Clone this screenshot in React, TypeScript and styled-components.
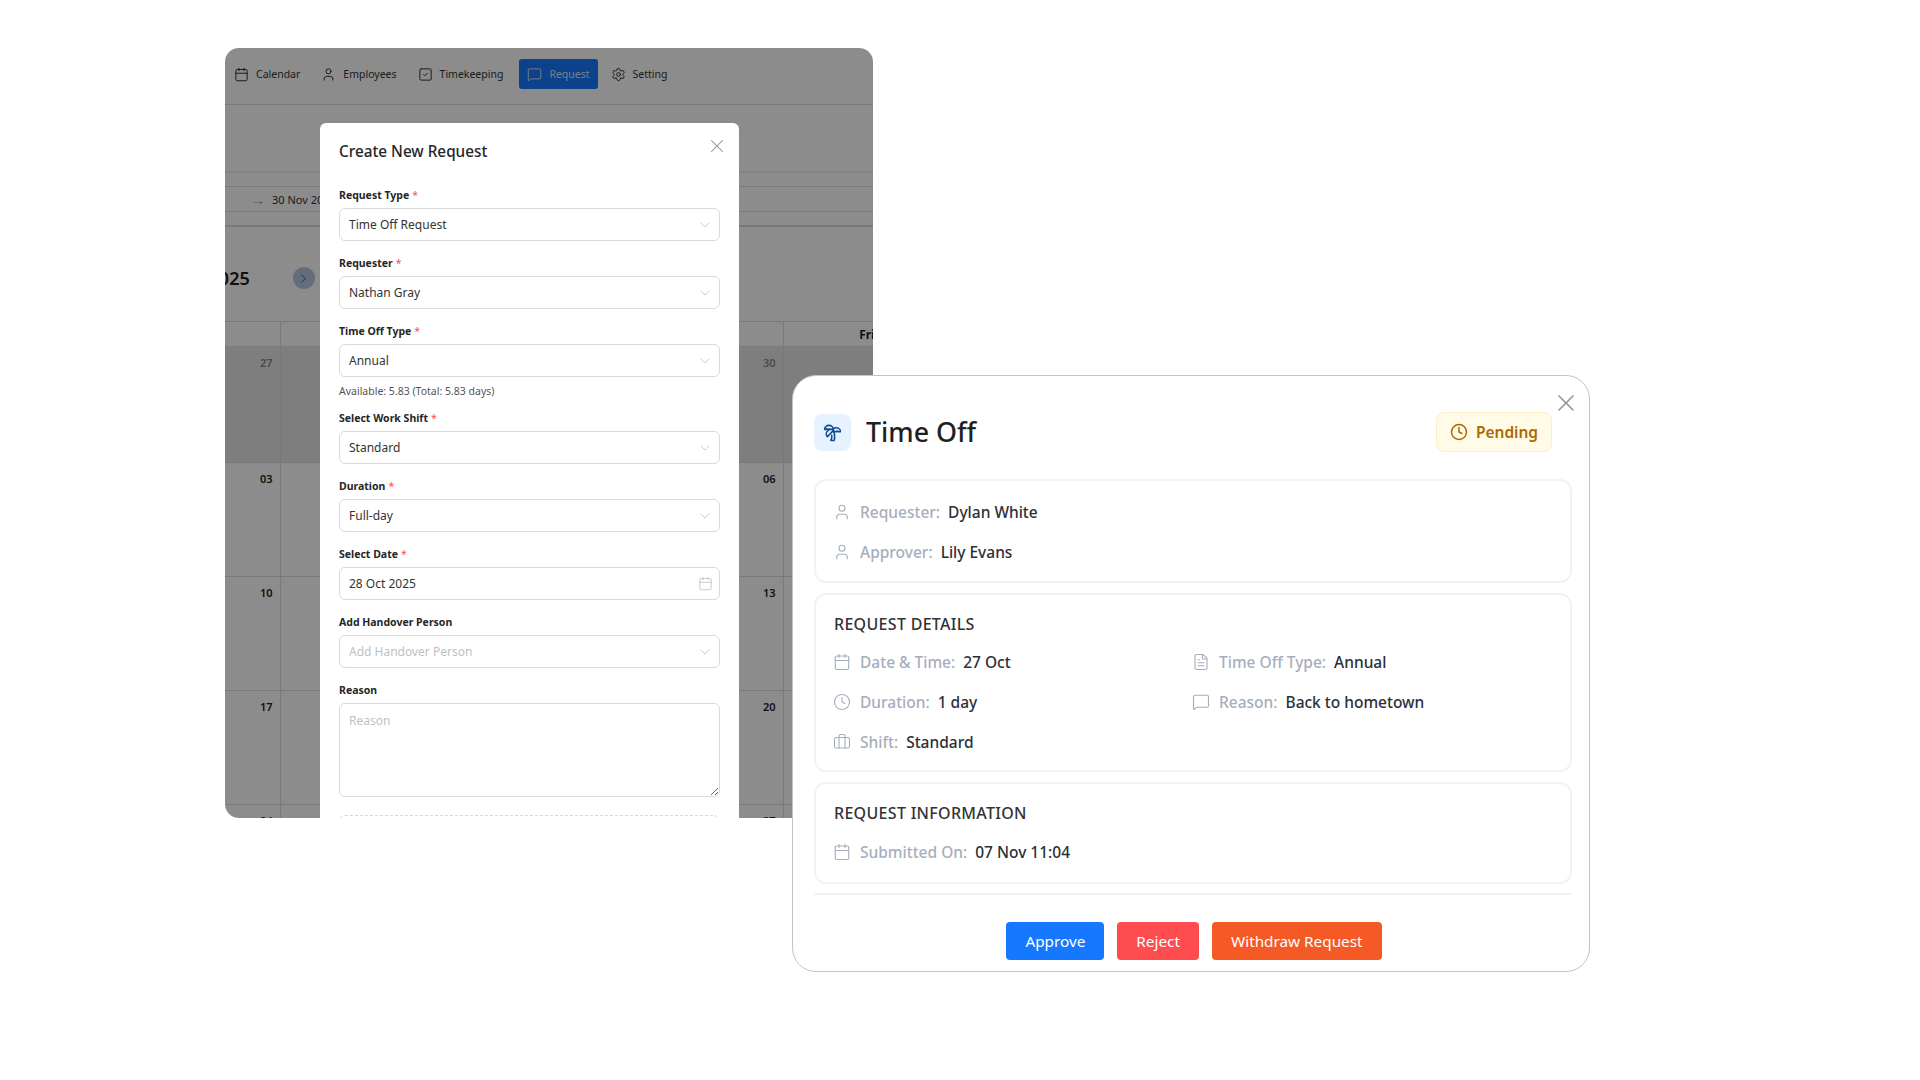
import React from 'react';
import styled, { createGlobalStyle } from 'styled-components';
import {
  Briefcase,
  Calendar,
  ChevronDown,
  ChevronRight,
  Clock,
  FileText,
  MessageSquare,
  Settings,
  SquareCheck,
  TreePalm,
  User,
  X,
} from 'lucide-react';

const GlobalStyle = createGlobalStyle`
  html, body {
    margin: 0;
    padding: 0;
    background: #fff;
  }
  * {
    box-sizing: border-box;
  }
`;

const FONT = `"Noto Sans", "Open Sans", "Liberation Sans", sans-serif`;

const Canvas = styled.div`
  position: relative;
  width: 1920px;
  height: 1080px;
  overflow: hidden;
  background: #fff;
  font-family: ${FONT};
`;

// back window
const BackWindow = styled.div`
  position: absolute;
  left: 225px;
  top: 48px;
  width: 648px;
  height: 770px;
  border-radius: 14px;
  overflow: hidden;
  background: #fff;
`;

const Mask = styled.div`
  position: absolute;
  inset: 0;
  background: rgba(0, 0, 0, 0.45);
`;

const Nav = styled.nav`
  height: 57px;
  display: flex;
  align-items: center;
  gap: 5px;
  padding: 0 0 4px 1px;
  border-bottom: 1px solid #ddd;
`;

const NavItem = styled.div<{ $active?: boolean }>`
  height: 30px;
  display: flex;
  align-items: center;
  gap: 7px;
  margin-left: ${(p) => (p.$active ? '3px' : '0')};
  padding: 0 8px;
  border-radius: 3px;
  font-size: 10.5px;
  color: ${(p) => (p.$active ? '#d8e6fb' : '#333')};
  background: ${(p) => (p.$active ? '#1677ff' : 'transparent')};
`;

const Hero = styled.div`
  height: 68px;
  border-bottom: 2px solid #eee;
`;

const FilterBar = styled.div`
  height: 54px;
  padding-top: 13px;
  border-bottom: 2px solid #ddd;
`;

const RangeBox = styled.div`
  height: 26px;
  display: flex;
  align-items: center;
  gap: 7px;
  padding-left: 26px;
  border-top: 1px solid #ddd;
  border-bottom: 1px solid #ddd;
  font-size: 11px;
  color: #333;
`;

const Arrow = styled.span`
  font-size: 14px;
  color: #999;
`;

const MonthBar = styled.div`
  height: 95px;
  display: flex;
  align-items: center;
  gap: 43px;
  margin-left: -56px;
  padding-top: 8px;
  border-bottom: 1px solid #ddd;
`;

const MonthTitle = styled.div`
  font-size: 18px;
  font-weight: 600;
  color: #222;
  white-space: nowrap;
`;

const RoundButton = styled.div`
  width: 22px;
  height: 22px;
  border-radius: 50%;
  display: flex;
  align-items: center;
  justify-content: center;
  background: #b4c8e0;
  color: #1f5fa8;
`;

const CalendarGrid = styled.div`
  display: grid;
  grid-template-columns: repeat(5, 167.67px);
  grid-template-rows: 25px 116px;
  grid-auto-rows: 114px;
  margin-left: -112px;
  width: 838px;
`;

const HeadCell = styled.div`
  height: 25px;
  display: flex;
  align-items: center;
  justify-content: center;
  font-size: 12px;
  font-weight: 700;
  color: #222;
  border-right: 1px solid #ddd;
  border-bottom: 1px solid #ddd;
`;

const DayCell = styled.div<{ $muted?: boolean }>`
  padding: 8px 7px;
  text-align: right;
  font-size: 11px;
  font-weight: 600;
  color: ${(p) => (p.$muted ? '#888' : '#222')};
  background: ${(p) => (p.$muted ? '#e6e6e6' : 'transparent')};
  border-right: 1px solid #ddd;
  border-bottom: 1px solid #ddd;
`;

// create request modal
const Modal = styled.div`
  position: absolute;
  left: 95px;
  top: 75px;
  width: 419px;
  min-height: 760px;
  padding: 16px 19px;
  background: #fff;
  border-radius: 6px;
`;

const ModalClose = styled.div`
  position: absolute;
  top: 12px;
  right: 11px;
  color: #8c8c8c;
  display: flex;
`;

const ModalTitle = styled.h2`
  margin: 0 0 24px;
  font-size: 15.3px;
  line-height: 24px;
  font-weight: 500;
  color: #262626;
`;

const Field = styled.div`
  margin-bottom: 14px;
`;

const Label = styled.div`
  height: 16px;
  margin-bottom: 5px;
  font-size: 10.5px;
  line-height: 16px;
  font-weight: 700;
  color: #262626;
`;

const Star = styled.span`
  margin-left: 3px;
  color: #ff4d4f;
  font-weight: 400;
`;

const SelectBox = styled.div<{ $placeholder?: boolean }>`
  height: 33px;
  display: flex;
  align-items: center;
  justify-content: space-between;
  padding: 0 6px 0 9px;
  border: 1px solid #d9d9d9;
  border-radius: 6px;
  font-size: 12px;
  color: ${(p) => (p.$placeholder ? '#bfbfbf' : '#333')};
  svg {
    color: #bfbfbf;
  }
`;

const Help = styled.div`
  margin: 6px 0 -3px;
  height: 16px;
  font-size: 10.5px;
  line-height: 16px;
  color: #555;
`;

const Reason = styled.textarea`
  display: block;
  width: 100%;
  height: 94px;
  padding: 8px 9px;
  border: 1px solid #d9d9d9;
  border-radius: 6px;
  outline: none;
  font-family: ${FONT};
  font-size: 12px;
  &::placeholder {
    color: #bfbfbf;
  }
`;

const Dropzone = styled.div`
  height: 40px;
  margin-top: 18px;
  border: 1px dashed #d9d9d9;
  border-radius: 6px;
`;

// time off detail window
const DetailWindow = styled.div`
  position: absolute;
  left: 792px;
  top: 375px;
  width: 798px;
  height: 597px;
  padding: 36px 17px 0 21px;
  background: #fff;
  border: 1px solid #c4c4c4;
  border-radius: 24px;
`;

const DetailClose = styled.div`
  position: absolute;
  top: 13px;
  right: 9px;
  display: flex;
  color: #999;
`;

const DetailHeader = styled.div`
  height: 40px;
  display: flex;
  align-items: center;
  margin-bottom: 27px;
  padding-right: 20px;
`;

const IconTile = styled.div`
  width: 37px;
  height: 37px;
  display: flex;
  align-items: center;
  justify-content: center;
  margin-right: 15px;
  border-radius: 8px;
  background: #e6f2ff;
  color: #0f4c8f;
`;

const DetailTitle = styled.h1`
  flex: 1;
  margin: 0;
  font-size: 26.8px;
  line-height: 40px;
  font-weight: 500;
  color: #1f1f1f;
`;

const Badge = styled.div`
  width: 116px;
  height: 40px;
  display: flex;
  align-items: center;
  justify-content: center;
  gap: 8px;
  border: 1px solid #fcefc7;
  border-radius: 8px;
  background: #fffbe6;
  font-size: 15.5px;
  font-weight: 600;
  color: #ad6800;
`;

const Card = styled.section<{ $top: number; $bottom: number }>`
  display: flex;
  flex-direction: column;
  gap: 16px;
  margin-bottom: 10px;
  padding: ${(p) => p.$top}px 18px ${(p) => p.$bottom}px;
  border: 2px solid #f0f2f7;
  border-radius: 12px;
`;

const CardTitle = styled.h3`
  margin: 0;
  font-size: 16px;
  line-height: 22px;
  font-weight: 500;
  letter-spacing: 0.3px;
  color: #333;
`;

const DetailsGrid = styled.div`
  display: grid;
  grid-template-columns: 359px 1fr;
  row-gap: 16px;
  margin-top: -1px;
`;

const InfoRow = styled.div`
  height: 24px;
  display: flex;
  align-items: center;
  font-size: 15.5px;
  font-weight: 500;
  white-space: nowrap;
`;

const InfoIcon = styled.span`
  width: 15px;
  display: flex;
  justify-content: center;
  margin-right: 11px;
  color: #a6aebd;
  svg {
    flex: none;
  }
`;

const InfoLabel = styled.span`
  margin-right: 8px;
  color: #a6aebd;
`;

const InfoValue = styled.span`
  color: #2b2f38;
`;

const Divider = styled.div`
  height: 2px;
  margin-top: -1px;
  background: #f0f2f7;
`;

const Actions = styled.div`
  display: flex;
  justify-content: center;
  gap: 13px;
  margin-top: 27px;
  padding-left: 2px;
`;

const ActionButton = styled.button<{ $color: string }>`
  height: 38px;
  padding: 0 19px;
  border: none;
  border-radius: 4px;
  background: ${(p) => p.$color};
  color: #fff;
  font-family: ${FONT};
  font-size: 15.3px;
`;

const navItems = [
  { label: 'Calendar', icon: Calendar },
  { label: 'Employees', icon: User },
  { label: 'Timekeeping', icon: SquareCheck },
  { label: 'Request', icon: MessageSquare, active: true },
  { label: 'Setting', icon: Settings },
];

const weekdays = ['Mon', 'Tue', 'Wed', 'Thu', 'Fri'];

const weeks = [
  { muted: true, days: ['27', '28', '29', '30', '31'] },
  { muted: false, days: ['03', '04', '05', '06', '07'] },
  { muted: false, days: ['10', '11', '12', '13', '14'] },
  { muted: false, days: ['17', '18', '19', '20', '21'] },
  { muted: false, days: ['24', '25', '26', '27', '28'] },
];

const fields = [
  { label: 'Request Type', value: 'Time Off Request', required: true },
  { label: 'Requester', value: 'Nathan Gray', required: true },
  { label: 'Time Off Type', value: 'Annual', required: true, help: 'Available: 5.83 (Total: 5.83 days)' },
  { label: 'Select Work Shift', value: 'Standard', required: true },
  { label: 'Duration', value: 'Full-day', required: true },
  { label: 'Select Date', value: '28 Oct 2025', required: true, date: true },
  { label: 'Add Handover Person', value: 'Add Handover Person', placeholder: true },
];

interface InfoProps {
  icon: React.ElementType;
  label: string;
  value: string;
}

const Info: React.FC<InfoProps> = ({ icon: Icon, label, value }) => (
  <InfoRow>
    <InfoIcon>
      <Icon size={18} strokeWidth={1.5} />
    </InfoIcon>
    <InfoLabel>{label}</InfoLabel>
    <InfoValue>{value}</InfoValue>
  </InfoRow>
);

const App: React.FC = () => {
  return (
    <Canvas>
      <GlobalStyle />
      <BackWindow>
        <Nav>
          {navItems.map((item) => (
            <NavItem key={item.label} $active={item.active}>
              <item.icon size={15} strokeWidth={1.6} />
              {item.label}
            </NavItem>
          ))}
        </Nav>
        <Hero />
        <FilterBar>
          <RangeBox>
            <Arrow>→</Arrow>
            30 Nov 2025
          </RangeBox>
        </FilterBar>
        <MonthBar>
          <MonthTitle>Nov 2025</MonthTitle>
          <RoundButton>
            <ChevronRight size={15} strokeWidth={1.5} />
          </RoundButton>
        </MonthBar>
        <CalendarGrid>
          {weekdays.map((d) => (
            <HeadCell key={d}>{d}</HeadCell>
          ))}
          {weeks.map((week) =>
            week.days.map((day) => (
              <DayCell key={`${week.days[0]}-${day}`} $muted={week.muted}>
                {day}
              </DayCell>
            ))
          )}
        </CalendarGrid>
        <Mask />
        <Modal>
          <ModalClose>
            <X size={22} strokeWidth={1.1} />
          </ModalClose>
          <ModalTitle>Create New Request</ModalTitle>
          {fields.map((f) => (
            <Field key={f.label}>
              <Label>
                {f.label}
                {f.required && <Star>*</Star>}
              </Label>
              <SelectBox $placeholder={f.placeholder}>
                {f.value}
                {f.date ? <Calendar size={15} strokeWidth={1.3} /> : <ChevronDown size={16} strokeWidth={1.2} />}
              </SelectBox>
              {f.help && <Help>{f.help}</Help>}
            </Field>
          ))}
          <Label>Reason</Label>
          <Reason placeholder="Reason" readOnly />
          <Dropzone />
        </Modal>
      </BackWindow>

      <DetailWindow>
        <DetailClose>
          <X size={28} strokeWidth={1.5} />
        </DetailClose>
        <DetailHeader>
          <IconTile>
            <TreePalm size={19} strokeWidth={2} />
          </IconTile>
          <DetailTitle>Time Off</DetailTitle>
          <Badge>
            <Clock size={18} strokeWidth={2} />
            Pending
          </Badge>
        </DetailHeader>
        <Card $top={19} $bottom={17}>
          <Info icon={User} label="Requester:" value="Dylan White" />
          <Info icon={User} label="Approver:" value="Lily Evans" />
        </Card>
        <Card $top={18} $bottom={16}>
          <CardTitle>REQUEST DETAILS</CardTitle>
          <DetailsGrid>
            <Info icon={Calendar} label="Date & Time:" value="27 Oct" />
            <Info icon={FileText} label="Time Off Type:" value="Annual" />
            <Info icon={Clock} label="Duration:" value="1 day" />
            <Info icon={MessageSquare} label="Reason:" value="Back to hometown" />
            <Info icon={Briefcase} label="Shift:" value="Standard" />
          </DetailsGrid>
        </Card>
        <Card $top={18} $bottom={18}>
          <CardTitle>REQUEST INFORMATION</CardTitle>
          <Info icon={Calendar} label="Submitted On:" value="07 Nov 11:04" />
        </Card>
        <Divider />
        <Actions>
          <ActionButton $color="#1677ff">Approve</ActionButton>
          <ActionButton $color="#ff4d4f">Reject</ActionButton>
          <ActionButton $color="#f55a26">Withdraw Request</ActionButton>
        </Actions>
      </DetailWindow>
    </Canvas>
  );
};

export default App;
